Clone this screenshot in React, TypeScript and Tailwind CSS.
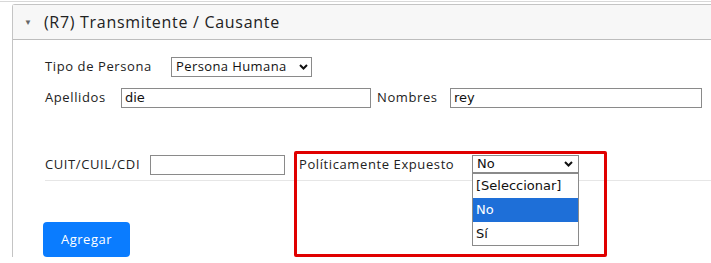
import React from 'react';

const label = "text-[13px] tracking-[0.6px] text-[#222] whitespace-nowrap";
const field =
  "h-[20px] border border-[#8a8a8a] bg-white px-[3px] text-[13px] leading-[18px] text-[#111] [font-family:'DejaVu_Sans',sans-serif]";

const Chevron = () => (
  <svg width="9" height="6" viewBox="0 0 9 6" className="shrink-0">
    <path d="M1 1 L4.5 4.5 L8 1" fill="none" stroke="#111" strokeWidth="2" />
  </svg>
);

export default function App() {
  return (
    <div className="relative h-[263px] w-[711px] overflow-hidden bg-white [font-family:'Open_Sans',sans-serif]">
      {/* outer frame line */}
      <div className="h-[2px] border-b border-[#d8d8d8]" />

      <div className="ml-[12px] mt-[2px] rounded-tl-[3px] border-l border-t border-[#c4c4c4]">
        {/* Header */}
        <div className="flex h-[35px] items-center border-b border-[#bdbdbd] bg-[#f7f7f7]">
          <span className="ml-[11px] text-[8px] text-[#666]">▼</span>
          <span className="ml-[12px] text-[16px] tracking-[0.7px] text-[#222]">(R7) Transmitente / Causante</span>
        </div>

        {/* Body */}
        <div className="pl-[32px] pt-[17px]">
          <div className="flex h-[20px] items-center">
            <span className={`${label} w-[126px]`}>Tipo de Persona</span>
            <div className="flex h-[20px] w-[141px] items-center justify-between border border-[#8a8a8a] bg-white pl-[4px] pr-[3px]">
              <span className="text-[13px] tracking-[0.4px] text-[#111]">Persona Humana</span>
              <Chevron />
            </div>
          </div>

          <div className="mt-[11px] flex h-[20px] items-center">
            <span className={`${label} w-[76px]`}>Apellidos</span>
            <div className={`${field} w-[250px]`}>die</div>
            <span className={`${label} ml-[6px] w-[73px]`}>Nombres</span>
            <div className={`${field} w-[252px]`}>rey</div>
          </div>

          <div className="mt-[47px] flex h-[26px] items-start border-b border-[#e6e6e6]">
            <span className={`${label} w-[105px] leading-[19px]`}>CUIT/CUIL/CDI</span>
            <div className={`${field} h-[19px] w-[135px]`} />
            <span className={`${label} ml-[14px] w-[173px] leading-[19px]`}>Políticamente Expuesto</span>
            <div className="flex h-[18px] w-[107px] items-center justify-between border border-[#8a8a8a] bg-white pl-[4px] pr-[5px]">
              <span className="text-[13px] leading-[16px] text-[#111] [font-family:'DejaVu_Sans',sans-serif]">No</span>
              <Chevron />
            </div>
          </div>

          <button className="mt-[41px] h-[35px] w-[87px] -translate-x-[2px] rounded-[4px] bg-[#0a7cff] text-[13px] tracking-[0.5px] text-white">
            Agregar
          </button>
        </div>
      </div>

      {/* open dropdown list */}
      <div className="absolute left-[472px] top-[173px] w-[107px] border border-[#8a8a8a] bg-white text-[13px] text-[#111] [font-family:'DejaVu_Sans',sans-serif]">
        <div className="h-[24px] pl-[3px] leading-[24px]">[Seleccionar]</div>
        <div className="h-[24px] bg-[#1e6fd8] pl-[3px] leading-[24px] text-white">No</div>
        <div className="h-[23px] pl-[3px] leading-[23px]">Sí</div>
      </div>

      {/* red highlight annotation */}
      <div className="pointer-events-none absolute left-[294px] top-[151px] h-[106px] w-[313px] rounded-[2px] border-[3px] border-[#e00000]" />
    </div>
  );
}
